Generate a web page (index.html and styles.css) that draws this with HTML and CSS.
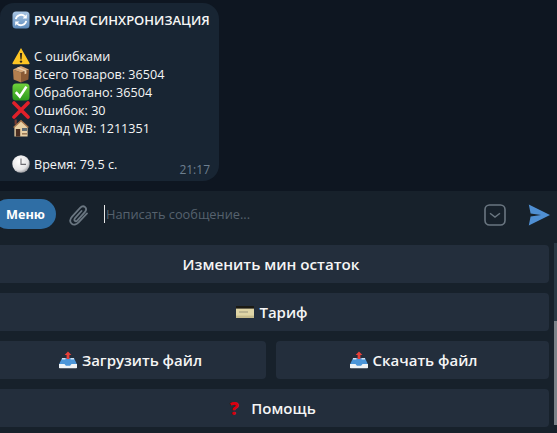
FILE: index.html
```html
<!doctype html>
<html>

<head>
  <title>Telegram - bot chat</title>
  <meta http-equiv="Content-Type" content="text/html; charset=UTF-8">
  <link rel="stylesheet" href="styles.css">
</head>

<body>
  <svg class="defs" width="0" height="0">
    <defs>
      <linearGradient id="sync-bg" x1="0" y1="0" x2="0" y2="1">
        <stop offset="0" stop-color="#a9c6e4" />
        <stop offset="1" stop-color="#5f8cbc" />
      </linearGradient>
      <linearGradient id="check-bg" x1="0" y1="0" x2="0" y2="1">
        <stop offset="0" stop-color="#6fd03c" />
        <stop offset="1" stop-color="#2c9a1c" />
      </linearGradient>
      <radialGradient id="clock-bg" cx=".4" cy=".35" r=".7">
        <stop offset="0" stop-color="#ffffff" />
        <stop offset=".7" stop-color="#e4e4e6" />
        <stop offset="1" stop-color="#8f9095" />
      </radialGradient>
      <symbol id="sync" viewBox="0 0 18 18">
        <rect x=".5" y=".5" width="17" height="17" rx="3.5" fill="url(#sync-bg)" />
        <path d="M3.8 8.2a5.3 5.3 0 0 1 9-2.8" fill="none" stroke="#fff" stroke-width="1.8" />
        <path d="M14.8 3.2v4.2h-4.2z" fill="#fff" />
        <path d="M14.2 9.8a5.3 5.3 0 0 1-9 2.8" fill="none" stroke="#fff" stroke-width="1.8" />
        <path d="M3.2 14.8v-4.2h4.2z" fill="#fff" />
      </symbol>
      <symbol id="warning" viewBox="0 0 18 18">
        <path d="M9 1 17.5 16a.8.8 0 0 1-.7 1.2H1.2a.8.8 0 0 1-.7-1.2z" fill="#fdc524" />
        <path d="M7.9 6h2.2l-.5 6.6H8.4z" fill="#33291a" />
        <circle cx="9" cy="14.6" r="1.2" fill="#33291a" />
      </symbol>
      <symbol id="box" viewBox="0 0 18 18">
        <path d="M1 4.6 9 7.6V17.6L1.6 14.4z" fill="#b5804f" />
        <path d="M17 4.6 9 7.6V17.6L16.4 14.4z" fill="#8a5a35" />
        <path d="M1 4.6 9 1 17 4.6 9 7.6z" fill="#d7a878" />
        <path d="M4.6 3 12.6 6.2V9.2L14.4 8.6V5.4L6.4 2.2z" fill="#ecd0ac" />
      </symbol>
      <symbol id="check" viewBox="0 0 18 18">
        <rect x=".5" y=".5" width="17" height="17" rx="3.5" fill="url(#check-bg)" />
        <path d="M3.8 9.2 7.8 13.6 14.4 3.6" fill="none" stroke="#fff" stroke-width="2.6" />
      </symbol>
      <symbol id="cross" viewBox="0 0 18 18">
        <path d="M2 2 16 16M16 2 2 16" stroke="#e0202a" stroke-width="3.6" stroke-linecap="round" />
      </symbol>
      <symbol id="house" viewBox="0 0 18 18">
        <rect x="2.6" y=".5" width="2.2" height="5" fill="#7a3d33" />
        <path d="M2.4 7.8 9 2l6.6 5.8V17.6H2.4z" fill="#e7cfa4" />
        <path d="M1.6 8.6 9 1.8l7.4 6.8" fill="none" stroke="#a8764c" stroke-width="1.4" />
        <rect x="3.8" y="10" width="4.4" height="7.6" fill="#4a2d20" />
        <rect x="10" y="9" width="5" height="3" fill="#5d6a72" />
        <rect x="10" y="14" width="5" height="1.6" fill="#9a7a58" />
      </symbol>
      <symbol id="clock" viewBox="0 0 18 18">
        <circle cx="9" cy="9" r="8.7" fill="url(#clock-bg)" />
        <path d="M9 3.4V9.4H14" fill="none" stroke="#6c6c72" stroke-width="1.1" />
      </symbol>
      <symbol id="card" viewBox="0 0 18 14">
        <rect y="1" width="18" height="12" rx="1" fill="#dfd5a6" />
        <rect y="1" width="18" height="2.6" fill="#1b1a14" />
        <rect x="0" y="10.6" width="18" height="2.4" fill="#c6bb8c" />
        <rect x="3" y="6.4" width="9" height="1.2" fill="#a6a184" />
      </symbol>
      <symbol id="inbox" viewBox="0 0 18 18">
        <path d="M3 7h12l3 6.5V17H0v-3.5z" fill="#4b95d8" />
        <path d="M0 13h5.5l1.4 1.8h4.2L12.5 13H18v3.6a.7.7 0 0 1-.7.7H.7a.7.7 0 0 1-.7-.7z" fill="#eef2f5" />
        <path d="M3 7h3.4v1.6H3zM11.6 7H15v1.6h-3.4z" fill="#cfe0ee" />
        <path d="M9 .4 12.4 4H10.4V8H7.6V4H5.6z" fill="#e8403a" />
      </symbol>
    </defs>
  </svg>

  <div class="chat">
    <div class="bubble">
      <div class="line title"><svg class="emoji"><use href="#sync" /></svg>РУЧНАЯ СИНХРОНИЗАЦИЯ</div>
      <div class="line"></div>
      <div class="line"><svg class="emoji"><use href="#warning" /></svg>С ошибками</div>
      <div class="line"><svg class="emoji"><use href="#box" /></svg>Всего товаров: 36504</div>
      <div class="line"><svg class="emoji"><use href="#check" /></svg>Обработано: 36504</div>
      <div class="line"><svg class="emoji"><use href="#cross" /></svg>Ошибок: 30</div>
      <div class="line"><svg class="emoji"><use href="#house" /></svg>Склад WB: 1211351</div>
      <div class="line"></div>
      <div class="line"><svg class="emoji"><use href="#clock" /></svg>Время: 79.5 с.</div>
      <span class="time">21:17</span>
    </div>
  </div>

  <div class="compose">
    <div class="menu-btn">Меню</div>
    <svg class="clip" width="20" height="22" viewBox="0 0 20 22">
      <path d="M18 9.4 9.6 18.4c-2.2 2.4-5.2 2.8-7 1.2s-1.7-4.4.5-6.9l8-8.8c1.5-1.6 3.6-2 5-.7s1.2 3.2-.3 4.9l-7.4 8.2c-.8.9-1.9 1.1-2.6.5s-.5-1.7.3-2.6l6.4-7.2" fill="none" stroke="#6a7681" stroke-width="1.8" stroke-linecap="round" />
    </svg>
    <div class="input"><span class="caret"></span>Написать сообщение...</div>
    <svg class="kb-toggle" width="22" height="22" viewBox="0 0 22 22">
      <rect x="1" y="1" width="20" height="20" rx="4.5" fill="none" stroke="#6a7681" stroke-width="1.6" />
      <path d="M6 9.2 11 13l5-3.8" fill="none" stroke="#6a7681" stroke-width="1.4" />
    </svg>
    <svg class="send" width="22" height="22" viewBox="0 0 22 22">
      <path d="M.8.6 22 11 .8 21.4 2.6 12.4 13 11 2.6 9.6z" fill="#4f8fd3" />
    </svg>
  </div>

  <div class="bottom">
    <div class="keyboard">
      <div class="kb-row">
        <div class="kb-btn strong">Изменить мин остаток</div>
      </div>
      <div class="kb-row">
        <div class="kb-btn with-icon"><svg class="emoji-card"><use href="#card" /></svg>Тариф</div>
      </div>
      <div class="kb-row">
        <div class="kb-btn with-icon"><svg class="emoji"><use href="#inbox" /></svg>Загрузить файл</div>
        <div class="kb-btn with-icon"><svg class="emoji"><use href="#inbox" /></svg>Скачать файл</div>
      </div>
      <div class="kb-row">
        <div class="kb-btn with-icon"><span class="question">?</span>Помощь</div>
      </div>
    </div>
    <div class="scroll-track">
      <div class="scroll-thumb"></div>
    </div>
  </div>
</body>

</html>
```

FILE: styles.css
```css
html,
body {
  height: 100%;
  margin: 0;
  overflow: hidden;
  background-color: #17212b;
  color: #f5f5f5;
  font-family: 'Open Sans', 'Liberation Sans', sans-serif;
  font-size: 12.6px;
}

body {
  display: flex;
  flex-direction: column;
}

.defs {
  flex: none;
}

.chat {
  flex: 0 0 188px;
  padding-top: 3px;
  background-color: #0e1621;
}

.bubble {
  position: relative;
  box-sizing: border-box;
  width: 219px;
  height: 178px;
  padding: 8px 0 8px 12px;
  background-color: #182533;
  border-radius: 14px 16px 16px 0;
}

.line {
  display: flex;
  align-items: flex-start;
  gap: 4px;
  height: 18px;
  line-height: 20px;
  white-space: nowrap;
}

.title {
  font-size: 13px;
  font-weight: 600;
  line-height: 18px;
}

.emoji {
  flex: none;
  width: 18px;
  height: 18px;
}

.emoji-card {
  flex: none;
  width: 18px;
  height: 14px;
}

.time {
  position: absolute;
  right: 9px;
  bottom: 3px;
  font-size: 12px;
  line-height: 16px;
  color: #6d7f8f;
}

.compose {
  flex: 0 0 54px;
  display: flex;
  align-items: center;
  background-color: #17212b;
}

.menu-btn {
  box-sizing: border-box;
  width: 63px;
  height: 30px;
  margin: -8px 0 0 -7px;
  padding-left: 13px;
  line-height: 30px;
  border-radius: 15px;
  background-color: #2f6ea5;
  color: #fff;
  font-weight: 700;
  font-size: 12.7px;
}

.clip {
  margin: -6px 0 0 13px;
}

.input {
  flex: 1;
  display: flex;
  align-items: center;
  height: 18px;
  margin: -8px 0 0 15px;
  color: #56626e;
  font-size: 12.8px;
}

.caret {
  width: 1px;
  height: 18px;
  margin-right: 1px;
  background-color: #e8e8e8;
}

.kb-toggle {
  margin: -6px 22px 0 0;
}

.send {
  margin: -6px 7px 0 0;
}

.bottom {
  flex: 1;
  display: flex;
  min-height: 0;
}

.keyboard {
  flex: 1;
  display: flex;
  flex-direction: column;
  gap: 10px;
  margin-left: -7px;
}

.kb-row {
  display: flex;
  gap: 10px;
}

.kb-btn {
  flex: 1 1 0;
  display: flex;
  align-items: center;
  justify-content: center;
  gap: 5px;
  height: 38px;
  border-radius: 4px;
  background-color: #232e3c;
  font-size: 15px;
  font-weight: 600;
  white-space: nowrap;
}

.kb-btn.strong {
  font-size: 15.2px;
}

.kb-btn.with-icon {
  padding-left: 2px;
}

.question {
  width: 12px;
  margin-right: 6px;
  text-align: center;
  color: #d8000f;
  font-weight: 800;
  font-size: 18px;
}

.scroll-track {
  flex: 0 0 3px;
  display: flex;
  flex-direction: column;
  justify-content: flex-end;
  height: 182px;
  margin: -2px 0 0 5px;
  background-color: #2a3945;
}

.scroll-thumb {
  height: 104px;
  background-color: #7b8289;
}
```
